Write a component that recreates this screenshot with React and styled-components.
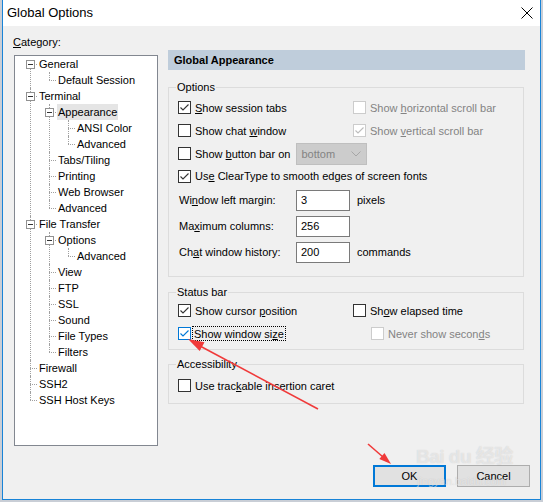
import React from 'react'
import styled, { createGlobalStyle } from 'styled-components'

const GlobalStyle = createGlobalStyle`
  html, body {
    margin: 0;
    padding: 0;
    background: #c9ced6;
  }
  body {
    font-family: "Liberation Sans", Arial, sans-serif;
    font-size: 11px;
    color: #000;
  }
`

const Page = styled.div`
  position: relative;
  width: 543px;
  height: 502px;
  overflow: hidden;
`

const Window = styled.div`
  margin-left: 2px;
  width: 539px;
  height: 500px;
  box-sizing: border-box;
  border: 1px solid #1883d7;
  border-top: 0;
  background: #f0f0f0;
  display: flex;
  flex-direction: column;
`

const TitleBar = styled.div`
  height: 26px;
  flex-shrink: 0;
  background: #fff;
  display: flex;
  align-items: center;
  justify-content: space-between;
  padding: 0 7px 0 4px;
`

const Title = styled.span`
  font-size: 13px;
  line-height: 16px;
  margin-top: -1px;
`

const Body = styled.div`
  flex: 1;
  display: flex;
  flex-direction: column;
`

const Main = styled.div`
  display: flex;
  padding-left: 11px;
`

const Sidebar = styled.div`
  width: 144px;
  padding-top: 8px;
`

const CategoryLabel = styled.div`
  line-height: 16px;
  margin: 0 0 5px -1px;
`

const U = styled.span`
  text-decoration: underline;
  text-underline-offset: 1px;
`

const Tree = styled.div`
  height: 391px;
  box-sizing: border-box;
  border: 1px solid #828790;
  background: #fff;
  overflow: hidden;
`

const Ul = styled.ul`
  list-style: none;
  margin: 0;
  padding: 0 0 0 ${p => (p.$root ? 0 : 19)}px;
`

const Li = styled.li`
  position: relative;

  &::before {
    content: '';
    position: absolute;
    left: 15px;
    top: 8px;
    width: 7px;
    border-top: 1px dotted #a0a0a0;
  }

  &::after {
    content: '';
    position: absolute;
    left: 15px;
    top: ${p => (p.$first ? 8 : 0)}px;
    bottom: 0;
    border-left: 1px dotted #a0a0a0;
  }

  &:last-child::after {
    bottom: auto;
    height: ${p => (p.$first ? 0 : 8)}px;
  }
`

const NodeRow = styled.div`
  position: relative;
  height: 16px;
  line-height: 16px;
  padding-left: 24px;
  white-space: nowrap;
`

const NodeText = styled.span`
  display: inline-block;
  padding: 0 1px;
  margin-left: -1px;
  background: ${p => (p.$selected ? '#e5e5e5' : 'transparent')};
`

const Expander = styled.span`
  position: absolute;
  z-index: 1;
  left: 11px;
  top: 4px;
  width: 9px;
  height: 9px;
  box-sizing: border-box;
  border: 1px solid #919191;
  background: #fff;

  &::after {
    content: '';
    position: absolute;
    left: 1px;
    top: 3px;
    width: 5px;
    height: 1px;
    background: #333;
  }
`

const Panel = styled.div`
  width: 357px;
  margin: 24px 0 0 10px;
`

const PanelHeader = styled.div`
  height: 20px;
  line-height: 20px;
  padding-left: 6px;
  background: #bfcddb;
  font-weight: bold;
`

const Group = styled.fieldset`
  width: 356px;
  box-sizing: border-box;
  margin: ${p => p.$mt}px 0 0;
  padding: ${p => p.$pt}px 7px ${p => p.$pb}px;
  border: 1px solid #dcdcdc;
  min-width: 0;
`

const Legend = styled.legend`
  padding: 0 1px;
  line-height: 14px;
`

const Row = styled.div`
  display: grid;
  grid-template-columns: ${p => (p.$wide ? '1fr' : '175px 1fr')};
  height: ${p => p.$h || 23}px;
  align-items: center;
  padding-left: 2px;
`

const Item = styled.label`
  display: flex;
  align-items: center;
  gap: 4px;
  margin-left: ${p => p.$indent || 0}px;
  color: ${p => (p.$disabled ? '#838383' : '#000')};
  white-space: nowrap;
`

const Box = styled.span`
  width: 13px;
  height: 13px;
  box-sizing: border-box;
  flex-shrink: 0;
  display: inline-flex;
  align-items: center;
  justify-content: center;
  background: #fff;
  border: 1px solid ${p => (p.$focused ? '#0078d7' : p.$disabled ? '#cccccc' : '#333')};
`

const FocusText = styled.span`
  outline: 1px dotted #000;
  outline-offset: 0;
  padding: 1px 1px 0;
  margin-left: -2px;
`

const Combo = styled.div`
  width: 71px;
  height: 22px;
  flex-shrink: 0;
  box-sizing: border-box;
  margin-left: 2px;
  padding: 0 5px 0 4px;
  display: flex;
  align-items: center;
  justify-content: space-between;
  background: #cccccc;
  border: 1px solid #bfbfbf;
  color: #838383;
`

const InputRow = styled.div`
  display: grid;
  grid-template-columns: 117px 54px auto;
  height: 26px;
  align-items: center;
  padding-left: 3px;
`

const Field = styled.input`
  width: 54px;
  height: 21px;
  box-sizing: border-box;
  margin: 0;
  padding: 0 4px;
  border: 1px solid #7a7a7a;
  background: #fff;
  font: inherit;
  color: #000;
  outline: none;
`

const Unit = styled.span`
  margin-left: 7px;
`

const Footer = styled.div`
  margin-top: auto;
  display: flex;
  justify-content: flex-end;
  gap: 11px;
  padding: 0 10px 12px 0;
`

const Button = styled.button`
  width: 73px;
  height: 22px;
  box-sizing: border-box;
  margin: 0;
  padding: 0;
  font: inherit;
  font-size: 11px;
  color: #000;
  background: #e1e1e1;
  border: ${p => (p.$primary ? '2px solid #0078d7' : '1px solid #adadad')};
`

const Overlay = styled.svg`
  position: absolute;
  left: 0;
  top: 0;
  pointer-events: none;
`

const Watermark = styled.div`
  position: absolute;
  left: 416px;
  top: 446px;
  pointer-events: none;
  color: rgba(255, 255, 255, 0.5);
  text-shadow: 0 0 1px rgba(110, 110, 110, 0.3);
  font-family: "Liberation Sans", "Noto Sans CJK SC", sans-serif;
`

const MarkTop = styled.div`
  font-size: 19px;
  font-weight: bold;
  line-height: 22px;
  letter-spacing: -0.5px;
`

const MarkBottom = styled.div`
  font-size: 11px;
  line-height: 12px;
  margin: 7px 0 0 1px;
`

const Mn = ({ text }) => {
  const i = text.indexOf('&')
  if (i < 0) return <span>{text}</span>
  return (
    <span>
      {text.slice(0, i)}
      <U>{text[i + 1]}</U>
      {text.slice(i + 2)}
    </span>
  )
}

const CheckBox = ({ checked, disabled, focused }) => {
  const stroke = focused ? '#0078d7' : disabled ? '#bcbcbc' : '#333'
  return (
    <Box $disabled={disabled} $focused={focused}>
      {checked && (
        <svg width="11" height="11" viewBox="0 0 11 11">
          <path d="M1.5 5.5 L4 8 L9.5 2.5" fill="none" stroke={stroke} strokeWidth="1.1" />
        </svg>
      )}
    </Box>
  )
}

const Check = ({ label, checked, disabled, focused, indent }) => (
  <Item $disabled={disabled} $indent={indent}>
    <CheckBox checked={checked} disabled={disabled} focused={focused} />
    {focused ? (
      <FocusText>
        <Mn text={label} />
      </FocusText>
    ) : (
      <Mn text={label} />
    )}
  </Item>
)

const tree = [
  { label: 'General', children: [{ label: 'Default Session' }] },
  {
    label: 'Terminal',
    children: [
      { label: 'Appearance', selected: true, children: [{ label: 'ANSI Color' }, { label: 'Advanced' }] },
      { label: 'Tabs/Tiling' },
      { label: 'Printing' },
      { label: 'Web Browser' },
      { label: 'Advanced' },
    ],
  },
  {
    label: 'File Transfer',
    children: [
      { label: 'Options', children: [{ label: 'Advanced' }] },
      { label: 'View' },
      { label: 'FTP' },
      { label: 'SSL' },
      { label: 'Sound' },
      { label: 'File Types' },
      { label: 'Filters' },
    ],
  },
  { label: 'Firewall' },
  { label: 'SSH2' },
  { label: 'SSH Host Keys' },
]

const TreeList = ({ nodes, root }) => (
  <Ul $root={root}>
    {nodes.map((n, i) => (
      <Li key={n.label + i} $first={root && i === 0}>
        <NodeRow>
          {n.children && <Expander />}
          <NodeText $selected={n.selected}>{n.label}</NodeText>
        </NodeRow>
        {n.children && <TreeList nodes={n.children} />}
      </Li>
    ))}
  </Ul>
)

const Chevron = () => (
  <svg width="10" height="6" viewBox="0 0 10 6">
    <path d="M0.5 0.5 L5 5 L9.5 0.5" fill="none" stroke="#a6a6a6" strokeWidth="1" />
  </svg>
)

const CloseIcon = () => (
  <svg width="12" height="12" viewBox="0 0 12 12">
    <path d="M0.5 0.5 L11.5 11.5 M11.5 0.5 L0.5 11.5" stroke="#000" strokeWidth="1" />
  </svg>
)

export default function App() {
  return (
    <Page>
      <GlobalStyle />
      <Window>
        <TitleBar>
          <Title>Global Options</Title>
          <CloseIcon />
        </TitleBar>
        <Body>
          <Main>
            <Sidebar>
              <CategoryLabel>
                <Mn text="&Category:" />
              </CategoryLabel>
              <Tree>
                <TreeList nodes={tree} root />
              </Tree>
            </Sidebar>
            <Panel>
              <PanelHeader>Global Appearance</PanelHeader>

              <Group $mt={10} $pt={2} $pb={11}>
                <Legend>Options</Legend>
                <Row>
                  <Check label="&Show session tabs" checked />
                  <Check label="Show &horizontal scroll bar" disabled />
                </Row>
                <Row>
                  <Check label="Show chat &window" />
                  <Check label="Show &vertical scroll bar" checked disabled />
                </Row>
                <Row $wide>
                  <Item>
                    <CheckBox />
                    <Mn text="Show &button bar on" />
                    <Combo>
                      bottom
                      <Chevron />
                    </Combo>
                  </Item>
                </Row>
                <Row $wide $h={22}>
                  <Check label="Us&e ClearType to smooth edges of screen fonts" checked />
                </Row>
                <InputRow>
                  <Mn text="Wi&ndow left margin:" />
                  <Field readOnly value="3" />
                  <Unit>pixels</Unit>
                </InputRow>
                <InputRow>
                  <Mn text="Ma&ximum columns:" />
                  <Field readOnly value="256" />
                  <span />
                </InputRow>
                <InputRow>
                  <Mn text="Ch&at window history:" />
                  <Field readOnly value="200" />
                  <Unit>commands</Unit>
                </InputRow>
              </Group>

              <Group $mt={8} $pt={0} $pb={4}>
                <Legend>Status bar</Legend>
                <Row>
                  <Check label="Show cursor &position" checked />
                  <Check label="Sh&ow elapsed time" />
                </Row>
                <Row>
                  <Check label="Show window si&ze" checked focused />
                  <Check label="Never show secon&ds" disabled indent={18} />
                </Row>
              </Group>

              <Group $mt={7} $pt={3} $pb={6}>
                <Legend>Accessibility</Legend>
                <Row $wide>
                  <Check label="Use trac&kable insertion caret" />
                </Row>
              </Group>
            </Panel>
          </Main>
          <Footer>
            <Button $primary>OK</Button>
            <Button>Cancel</Button>
          </Footer>
        </Body>
      </Window>

      <Watermark>
        <MarkTop>Bai du 经验</MarkTop>
        <MarkBottom>jingyan.baidu.com</MarkBottom>
      </Watermark>

      <Overlay width="543" height="502" viewBox="0 0 543 502">
        <line x1="318" y1="409" x2="200" y2="346" stroke="#f03a3a" strokeWidth="1.6" />
        <polygon points="188,339 204.5,342.2 199.7,351" fill="#f03a3a" />
        <line x1="368" y1="444" x2="383" y2="457" stroke="#f03a3a" strokeWidth="1.6" />
        <polygon points="391,464 379.3,459.1 384.5,453.1" fill="#f03a3a" />
      </Overlay>
    </Page>
  )
}
